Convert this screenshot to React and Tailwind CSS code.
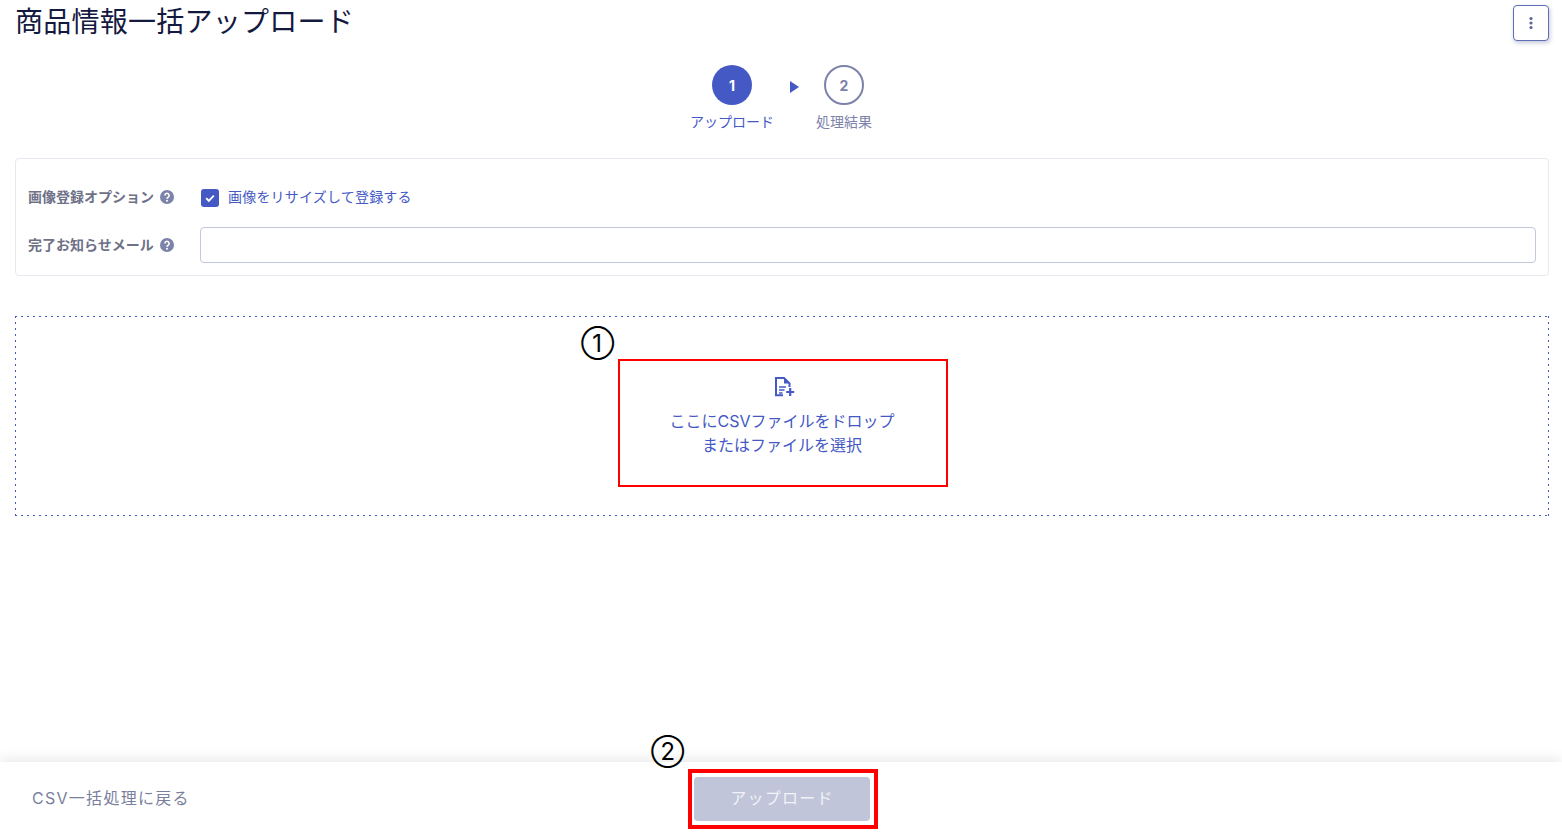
const sans = "font-['Inter','Noto_Sans_CJK_JP',sans-serif]";

function Help({ className = "" }) {
  return (
    <svg width="14" height="14" viewBox="0 0 14 14" className={`shrink-0 ${className}`}>
      <circle cx="7" cy="7" r="7" fill="#7d82ab" />
      <path d="M4.9 5.4a2.1 2.1 0 1 1 3.2 1.8c-.7.4-1.1.8-1.1 1.5" fill="none" stroke="#fff" strokeWidth="1.6" />
      <circle cx="7" cy="10.7" r="1" fill="#fff" />
    </svg>
  );
}

function FileIcon() {
  return (
    <svg width="20" height="20" viewBox="0 0 20 20" className="ml-[4px] shrink-0">
      <path d="M8 18.2H1V1h8l5.5 5.5V10" fill="none" stroke="#4559c5" strokeWidth="2" />
      <path d="M9 1v5.5h5.5z" fill="#4559c5" />
      <path d="M4 10h7M4 13h5.5M4 16h3.5" stroke="#4559c5" strokeWidth="1.6" />
      <path d="M15.2 11v8M11.2 15h8" stroke="#4559c5" strokeWidth="2.2" />
    </svg>
  );
}

export default function App() {
  return (
    <div className={`${sans} relative flex h-[834px] flex-col overflow-hidden bg-white`}>
      <main className="flex flex-1 flex-col pl-[15px] pr-[13px]">
        <header className="flex h-[42px] items-start justify-between pt-[5px]">
          <h1 className="text-[28px] leading-[34px] font-normal tracking-[0.25px] text-[#14193f]">商品情報一括アップロード</h1>
          <button className="flex size-[36px] items-center justify-center rounded-[4px] border border-[#5f6db5] bg-white shadow-[1px_2px_4px_rgba(60,70,130,0.3)]">
            <svg width="4" height="14" viewBox="0 0 4 14" fill="#5c6699">
              <circle cx="2" cy="2.5" r="1.6" /><circle cx="2" cy="7" r="1.6" /><circle cx="2" cy="11.5" r="1.6" />
            </svg>
          </button>
        </header>

        <nav className="mt-[23px] mr-[2px] flex justify-center gap-[42px]">
          <div className="relative flex w-[84px] flex-col items-center">
            <span className="flex size-[40px] items-center justify-center rounded-full bg-[#4559c5] text-[14px] font-bold text-white">1</span>
            <span className="mt-[7px] text-[14px] leading-[20px] text-[#4559c5]">アップロード</span>
            <svg className="absolute top-[16px] -right-[25px]" width="10" height="12" viewBox="0 0 10 12"><path d="M1 0l9 6-9 6z" fill="#4559c5" /></svg>
          </div>
          <div className="flex w-[56px] flex-col items-center">
            <span className="flex size-[40px] items-center justify-center rounded-full border-2 border-[#7d82ab] text-[14px] font-bold text-[#7d82ab]">2</span>
            <span className="mt-[7px] text-[14px] leading-[20px] text-[#7d82ab]">処理結果</span>
          </div>
        </nav>

        <section className="mt-[26px] flex h-[118px] flex-col rounded-[4px] border border-[#e8e9f0] pl-[12px] pr-[12px] pt-[25px]">
          <div className="flex h-[24px] items-center">
            <div className="flex w-[172px] items-center gap-[6px] text-[14px] font-bold text-[#6e7187]">
              <span>画像登録オプション</span><Help className="mt-[2px]" />
            </div>
            <span className="ml-px mt-[4px] flex size-[18px] items-center justify-center rounded-[3px] bg-[#4559c5]">
              <svg width="12" height="12" viewBox="0 0 12 12"><path d="M2.2 6.2l2.6 2.6 5-5.2" fill="none" stroke="#fff" strokeWidth="1.9" /></svg>
            </span>
            <span className="ml-[9px] text-[14px] tracking-[0.2px] text-[#4559c5]">画像をリサイズして登録する</span>
          </div>
          <div className="mt-[19px] flex h-[36px] items-center">
            <div className="flex w-[172px] items-center gap-[6px] text-[14px] font-bold text-[#6e7187]">
              <span className="pb-[2px]">完了お知らせメール</span><Help />
            </div>
            <input className="h-[36px] flex-1 rounded-[4px] border border-[#c3c8dc] bg-white" />
          </div>
        </section>

        <section className="mt-[40px] flex h-[200px] items-start justify-center pt-[43px] [background:repeating-linear-gradient(90deg,#4559c5_0_2px,transparent_2px_6px)_top/100%_1px_no-repeat,repeating-linear-gradient(90deg,#4559c5_0_2px,transparent_2px_6px)_bottom/100%_1px_no-repeat,repeating-linear-gradient(0deg,#4559c5_0_2px,transparent_2px_6px)_left/1px_100%_no-repeat,repeating-linear-gradient(0deg,#4559c5_0_2px,transparent_2px_6px)_right/1px_100%_no-repeat]">
          <div className="relative ml-[2px] flex h-[128px] w-[330px] flex-col items-center border-2 border-[#ff0000] pt-[16px] text-[16px] leading-[24px] text-[#4559c5]">
            <span className="absolute -top-[33px] -left-[39px] text-[24px] leading-[32px] text-black">①</span>
            <FileIcon />
            <span className="mt-[12px] mr-[2px]">ここにCSVファイルをドロップ</span>
            <span className="mr-[2px]">またはファイルを選択</span>
          </div>
        </section>
      </main>

      <footer className="relative flex h-[72px] items-center bg-white pl-[32px] shadow-[0_-3px_12px_rgba(0,0,0,0.09)]">
        <span className="text-[16px] tracking-[0.08em] text-[#7a7f9e]">CSV一括処理に戻る</span>
        <div className="absolute top-[7px] left-[688px] flex h-[60px] w-[190px] items-center border-4 border-[#ff0000] pl-[2px]">
          <span className="absolute -top-[37px] -left-[41px] text-[24px] leading-[32px] text-black">②</span>
          <button className="h-[44px] w-[176px] rounded-[4px] bg-[#c0c5d9] pb-[3px] text-[16px] tracking-[0.08em] text-[#f2f3f8]">アップロード</button>
        </div>
      </footer>
    </div>
  );
}
